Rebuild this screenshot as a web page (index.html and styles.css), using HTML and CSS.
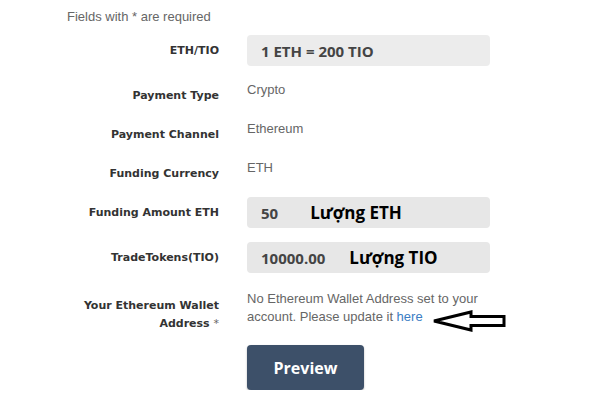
FILE: index.html
```html
<!DOCTYPE html>
<html lang="en">
  <head>
    <meta charset="UTF-8" />
    <title>Buy Tokens</title>
    <link rel="stylesheet" href="styles.css">
  </head>
  <body>
    <div class="form">
      <p class="note">Fields with * are required</p>

      <div class="row row-box first">
        <div class="label">ETH/TIO</div>
        <div class="box">1 ETH = 200 TIO</div>
      </div>

      <div class="row row-text after-box">
        <div class="label">Payment Type</div>
        <div class="value">Crypto</div>
      </div>

      <div class="row row-text">
        <div class="label">Payment Channel</div>
        <div class="value">Ethereum</div>
      </div>

      <div class="row row-text last-text">
        <div class="label">Funding Currency</div>
        <div class="value">ETH</div>
      </div>

      <div class="row row-box after-text">
        <div class="label">Funding Amount ETH</div>
        <div class="box input">
          <span class="num">50</span>
          <span class="hint hint-eth">Lượng ETH</span>
        </div>
      </div>

      <div class="row row-box">
        <div class="label">TradeTokens(TIO)</div>
        <div class="box input">
          <span class="num">10000.00</span>
          <span class="hint hint-tio">Lượng TIO</span>
        </div>
      </div>

      <div class="row row-wallet">
        <div class="label">Your Ethereum Wallet<br>Address <span class="req">*</span></div>
        <div class="value wallet">
          No Ethereum Wallet Address set to your account. Please update it <a href="#">here</a>
          <svg class="arrow" width="76" height="22" viewBox="0 0 76 22">
            <path d="M2 11 L39 2 L39 6.5 L72 6.5 L72 15.5 L39 15.5 L39 20 Z" fill="none" stroke="#000" stroke-width="3" stroke-linejoin="miter"/>
          </svg>
        </div>
      </div>

      <div class="row">
        <div class="label"></div>
        <button class="preview">Preview</button>
      </div>
    </div>
  </body>
</html>
```

FILE: styles.css
```css
body {
  margin: 0;
  background: #fff;
  font-family: "Liberation Sans", Arial, sans-serif;
}

.form {
  padding: 9px 0 0 8px;
}

.note {
  margin: 0 0 0 59px;
  font-size: 13px;
  line-height: 15px;
  color: #666;
}

.row {
  display: flex;
  gap: 28px;
}

.label {
  width: 211px;
  flex: none;
  text-align: right;
  font-family: "DejaVu Sans", Verdana, sans-serif;
  font-weight: bold;
  font-size: 11px;
  color: #333;
}

.row-box {
  margin-top: 14px;
}

.row-box.first {
  margin-top: 11px;
}

.row-box.after-text {
  margin-top: 0;
}

.row-box .label {
  line-height: 31px;
}

.box {
  width: 243px;
  height: 31px;
  box-sizing: border-box;
  padding: 0 14px;
  display: flex;
  align-items: center;
  background: #ececec;
  border-radius: 4px;
  font-family: "Open Sans", sans-serif;
  font-weight: bold;
  font-size: 15px;
  color: #444;
}

.box.input {
  background: #e7e7e7;
}

.row-text {
  height: 39px;
}

.row-text.after-box {
  margin-top: 16px;
}

.row-text.last-text {
  height: 37px;
}

.row-text .label {
  padding-top: 6px;
  line-height: 16px;
}

.value {
  font-size: 13px;
  line-height: 16px;
  color: #666;
}

.hint {
  font-family: "Open Sans", sans-serif;
  font-size: 17px;
  color: #000;
}

.hint-eth {
  margin-left: 32px;
}

.hint-tio {
  margin-left: 24px;
}

.row-wallet {
  margin-top: 17px;
}

.row-wallet .label {
  padding-top: 7px;
  line-height: 18px;
}

.req {
  font-weight: normal;
  color: #666;
}

.wallet {
  position: relative;
  width: 243px;
  line-height: 18px;
}

.wallet a {
  color: #3b7dc4;
  text-decoration: none;
}

.arrow {
  position: absolute;
  left: 185px;
  top: 20px;
}

.preview {
  margin-top: 12px;
  width: 117px;
  height: 45px;
  border: none;
  border-radius: 4px;
  background: #3d5069;
  box-shadow: 0 1px 2px rgba(0, 0, 0, 0.3);
  color: #fff;
  font-family: "Open Sans", sans-serif;
  font-weight: bold;
  font-size: 16px;
  cursor: pointer;
}
```
